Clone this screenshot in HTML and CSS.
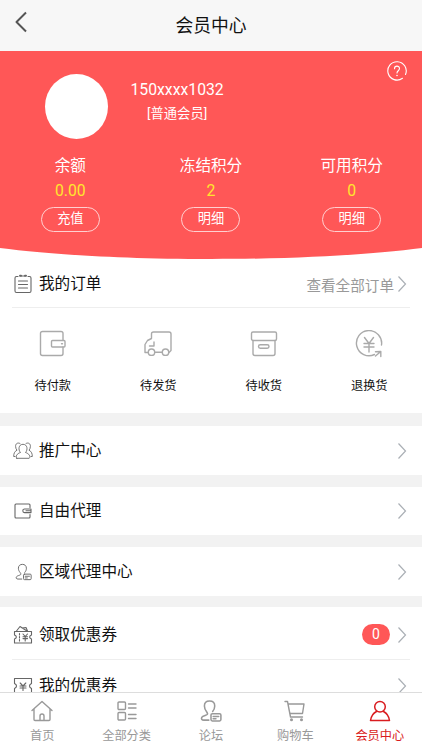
FILE: index.html
```html
<!DOCTYPE html>
<html lang="zh-CN">
<head>
<meta charset="utf-8">
<meta name="viewport" content="width=device-width, initial-scale=1">
<title>会员中心</title>
<link rel="stylesheet" href="styles.css">
</head>
<body>
<svg class="defs" width="0" height="0">
  <symbol id="chevron" viewBox="0 0 10 18"><path d="M1.5 1.5 8.5 9 1.5 16.5"/></symbol>
  <symbol id="forum" viewBox="0 0 20 20"><path d="M8 18.3H3.5C1.500 18.300 1 17 1.600 15.800C2.400 14.400 5.500 14 6.500 13.200C7.200 12.500 6.800 11.600 6 10.600C4.700 9 4 7.500 4 5.500C4 2.600 6 1 8.700 1S13.400 2.600 13.400 5.500C13.400 7.500 12.800 9 11.500 10.500"/><rect x="10" y="12.500" width="9" height="6.500" rx="1.200"/><path d="M12 15H17M12 17H14.500"/></symbol>
</svg>
<div class="page">
  <header class="topbar">
    <svg class="back" viewBox="0 0 12 22"><path d="M11 1.500 1.500 11 11 20.500"/></svg>
    <h1>会员中心</h1>
  </header>
  <main class="content">
    <section class="profile">
      <svg class="curve" viewBox="0 0 422 208" preserveAspectRatio="none"><path d="M0 0H422V197C380 202.500 310 208 211 208S42 202.500 0 197Z"/></svg>
      <div class="user">
        <div class="avatar"></div>
        <div class="identity">
          <div class="phone">150xxxx1032</div>
          <div class="level">[普通会员]</div>
        </div>
        <svg class="help" viewBox="0 0 20 20"><path d="M15.500 17.300A9.200 9.200 0 1 1 18.500 13.500M7.500 7.700C7.500 4.300 12.500 4.300 12.500 7.600C12.500 9.700 10 9.800 10 12"/><circle class="dot" cx="10" cy="14.500" r=".8"/></svg>
      </div>
      <div class="stats">
        <div class="stat"><span>余额</span><b>0.00</b><a>充值</a></div>
        <div class="stat"><span>冻结积分</span><b>2</b><a>明细</a></div>
        <div class="stat"><span>可用积分</span><b>0</b><a>明细</a></div>
      </div>
    </section>
    <section class="orders">
      <div class="row orders-head">
        <svg class="row-icon" viewBox="0 0 20 20"><path d="M5 2.500H3.500Q2 2.500 2 4V17Q2 18.500 3.500 18.500H16.500Q18 18.500 18 17V4Q18 2.500 16.500 2.500H15M8 2H12M5.500 7H14.500M5.500 10.500H14.500M5.500 14H14.500"/><path d="M7 1.800H8M12 1.800H13" stroke-width="2"/></svg>
        <span class="title">我的订单</span>
        <span class="more">查看全部订单</span>
        <svg class="chev"><use href="#chevron"/></svg>
      </div>
      <div class="order-grid">
        <div class="order"><svg viewBox="0 0 28 28"><path d="M24 10V3.500Q24 1.500 22 1.500H3.500Q1.500 1.500 1.500 3.500V23.500Q1.500 25.500 3.500 25.500H22Q24 25.500 24 23.500V17"/><rect x="12.500" y="10.500" width="13.500" height="6.500" rx="1"/><path d="M22.500 13.700H23.500"/></svg><span>待付款</span></div>
        <div class="order"><svg viewBox="0 0 28 28"><path d="M4 22.500H1V14.500L3.500 10.500 7.500 8.500V4Q7.500 2 9.500 2H25Q27 2 27 4V20.500L25 22.500M11 22.200H18M10 12V16H5.500"/><circle cx="7.500" cy="22.200" r="3.200"/><circle cx="21.500" cy="22.200" r="3.200"/></svg><span>待发货</span></div>
        <div class="order"><svg viewBox="0 0 28 28"><rect x="1.500" y="2" width="25" height="8.500" rx="1.500"/><path d="M3 10.500V23.500Q3 25.500 5 25.500H23Q25 25.500 25 23.500V10.500"/><rect x="8.500" y="14.800" width="10.500" height="3.500" rx="1.750"/></svg><span>待收货</span></div>
        <div class="order"><svg viewBox="0 0 28 28"><path d="M19.500 24.500A12.600 12.600 0 1 1 26.500 15M20.500 21.700 25.800 21.500V26.500M25.800 21.500 20.500 26M9.500 7.500 14 13.500 18.500 7.500M9 13.500H19M9 17H19M14 13.500V22"/></svg><span>退换货</span></div>
      </div>
    </section>
    <section class="row promo">
      <svg class="row-icon" viewBox="0 0 20 20"><g stroke-width=".9"><path d="M3.800 17.300H16.200C18 15.500 16 12.500 12.500 11.500C15 9 14.500 3.300 10 3.300S5 9 7.500 11.500C4 12.500 2 15.500 3.800 17.300Z"/><path d="M7 2.500C4.500 1 2.300 3 2.600 5.500Q2.800 8 4 9.200C1.500 10.500 .7 12.500 .7 15.500H2M13 2.500C15.500 1 17.700 3 17.400 5.500Q17.200 8 16 9.200C18.500 10.500 19.300 12.500 19.300 15.500H18"/></g></svg>
      <span class="title">推广中心</span><svg class="chev"><use href="#chevron"/></svg>
    </section>
    <section class="row agent">
      <svg class="row-icon" viewBox="0 0 20 20"><path d="M17 6.500V4Q17 3 16 3H3Q2 3 2 4V16Q2 17 3 17H16Q17 17 17 16V13.500"/><path d="M18 8H11.500Q9.800 8 9.800 9.800T11.500 11.600H18ZM13 9.800H17.500"/></svg>
      <span class="title">自由代理</span><svg class="chev"><use href="#chevron"/></svg>
    </section>
    <section class="row region">
      <svg class="row-icon" viewBox="0 0 20 20"><use href="#forum" x="2" y="1" width="17" height="18"/></svg>
      <span class="title">区域代理中心</span><svg class="chev"><use href="#chevron"/></svg>
    </section>
    <section class="coupons">
      <div class="row claim">
        <svg class="row-icon" viewBox="0 0 20 20"><path d="M1.500 6.500H18.500V10C16 11 16 13 18.500 14V18H1.500V14C4 13 4 11 1.500 10ZM3.500 6 7 1.500 14 6M9 3 13 2.500 14.500 6"/><path d="M6.500 8.500V16.500" stroke-dasharray="1.500 1.500"/><path d="M10 9 12.200 11.500 14.500 9M10 11.700H14.500M10 13.600H14.500M12.200 11.500V16"/></svg>
        <span class="title">领取优惠券</span><span class="badge">0</span><svg class="chev"><use href="#chevron"/></svg>
      </div>
      <div class="row mine">
        <svg class="row-icon" viewBox="0 0 20 20"><path d="M1.500 2.500H18.500V7.500C15.800 8.800 15.800 11.200 18.500 12.500V18.500H1.500V12.500C4.200 11.200 4.200 8.800 1.500 7.500Z"/><path d="M7.200 7 10 10 12.800 7M7 10H13M7 12H13M10 10V14.500"/></svg>
        <span class="title">我的优惠券</span><svg class="chev"><use href="#chevron"/></svg>
      </div>
    </section>
  </main>
  <nav class="tabs">
    <a><svg viewBox="0 0 22 22"><path d="M1 10.500 11 1.500 21 10.500M3 9V19.500Q3 20.500 4 20.500H18Q19 20.500 19 19.500V9M9 20.500V16Q9 14 11 14T13 16V20.500"/></svg><span>首页</span></a>
    <a><svg viewBox="0 0 22 22"><rect x="2" y="2" width="7.500" height="7.500" rx="1"/><rect x="2" y="12.500" width="7.500" height="7.500" rx="1"/><path d="M12.500 4H20M12.500 8H20M12.500 14.500H20M12.500 18.500H20"/></svg><span>全部分类</span></a>
    <a><svg viewBox="0 0 22 22"><use href="#forum" width="22" height="22"/></svg><span>论坛</span></a>
    <a><svg viewBox="0 0 22 22"><path d="M1 1.500H3.500L6.500 17H18.500M4 4H20L18.500 13.500H6.500"/><circle cx="7.500" cy="19.800" r=".8"/><circle cx="17.500" cy="19.800" r=".8"/></svg><span>购物车</span></a>
    <a class="active"><svg viewBox="0 0 22 22"><circle cx="11" cy="6.800" r="5.300"/><path d="M7.500 11.500Q2.500 14 1.500 20.500H20.500Q19.500 14 14.500 11.500"/></svg><span>会员中心</span></a>
  </nav>
</div>
</body>
</html>
```
FILE: styles.css
```css
* { box-sizing: border-box; }
body {
  margin: 0;
  color: #111;
  background: #f2f2f2;
  font-family: Roboto, "Noto Sans CJK SC", sans-serif;
}
svg {
  flex: none;
  fill: none;
  stroke: currentColor;
  stroke-width: 1.2;
  stroke-linecap: round;
  stroke-linejoin: round;
}
.defs { display: none; }
.page { display: flex; flex-direction: column; height: 750px; overflow: hidden; }
.content { flex: 1; min-height: 0; overflow: hidden; }

.topbar {
  display: grid;
  grid-template-columns: 60px 1fr 60px;
  flex: none;
  height: 51px;
  background: #f7f7f7;
}
.back { width: 12px; height: 22px; margin: 11px 0 0 15px; color: #555; stroke-width: 2; stroke-linecap: butt; }
h1 { margin: 0; font-size: 17.8px; font-weight: 400; line-height: 52px; text-align: center; }

.profile { position: relative; height: 208px; color: #fff; background: #fff; }
.curve { position: absolute; inset: 0; width: 100%; height: 208px; fill: #ff5757; stroke: none; }
.user { position: relative; display: flex; height: 103px; padding: 23px 15px 0 45px; }
.avatar { width: 63px; height: 65px; border-radius: 50%; background: #fff; }
.identity { flex: 1; padding: 4px 0 0 22.500px; }
.phone { font-size: 15.750px; line-height: 23px; }
.level { padding-left: 16.500px; font-size: 13.300px; line-height: 26px; }
.help { width: 20px; height: 20px; margin-top: -13px; stroke-width: 1.1; }
.help .dot { fill: currentColor; stroke: none; }
.stats { position: relative; display: grid; grid-template-columns: repeat(3, 1fr); }
.stat { display: flex; flex-direction: column; align-items: center; }
.stat span { font-size: 15.600px; line-height: 25px; }
.stat b { color: #ffe62e; font-size: 15.750px; font-weight: 400; line-height: 24px; }
.stat a { width: 59px; height: 25px; margin-top: 4px; border: 1.5px solid #ffd0d0; border-radius: 13px; font-size: 13.200px; line-height: 21px; text-align: center; }

.row { display: flex; align-items: center; padding: 0 15px 0 13px; background: #fff; }
.row-icon { width: 20px; height: 20px; margin-right: 6px; color: #666; stroke-width: 1.1; }
.title { flex: 1; font-size: 15.600px; line-height: 24px; }
.chev { width: 10px; height: 18px; color: #aaafb5; stroke-linecap: butt; stroke-linejoin: miter; }

.orders { height: 154px; background: #fff; }
.orders-head { height: 49px; padding-top: 1px; }
.more { margin-right: 3px; color: #999; font-size: 14.600px; }
.order-grid { display: grid; grid-template-columns: repeat(4, 1fr); padding-top: 22px; }
.orders-head, .claim { background: linear-gradient(#eee, #eee) 12px 100% / 398px 1px no-repeat, #fff; }
.order { display: flex; flex-direction: column; align-items: center; }
.order svg { width: 28px; height: 28px; color: #aaa; stroke-width: 1.4; }
.order span { margin-top: 18px; font-size: 12.200px; line-height: 20px; }

.promo { height: 49px; margin-top: 13px; }
.agent { height: 48px; margin-top: 12px; }
.region { height: 49px; margin-top: 12px; padding-top: 1px; }
.coupons { margin-top: 11px; }
.claim { height: 53px; padding-top: 2px; }
.mine { height: 52px; }
.badge { width: 28px; height: 21px; margin-right: 7px; border-radius: 10.500px; color: #fff; background: #ff5757; font-size: 14px; line-height: 21px; text-align: center; }

.tabs { display: grid; grid-template-columns: repeat(5, 1fr); flex: none; height: 58px; background: #fff; border-top: 1px solid #ddd; }
.tabs a { display: flex; flex-direction: column; align-items: center; padding-top: 7px; color: #999; }
.tabs svg { width: 22px; height: 22px; stroke-width: 1.400; }
.tabs span { margin-top: 4px; font-size: 12.200px; line-height: 20px; }
.tabs .active { color: #d91c20; }
.tabs .active svg { stroke-width: 1.500; }
```
